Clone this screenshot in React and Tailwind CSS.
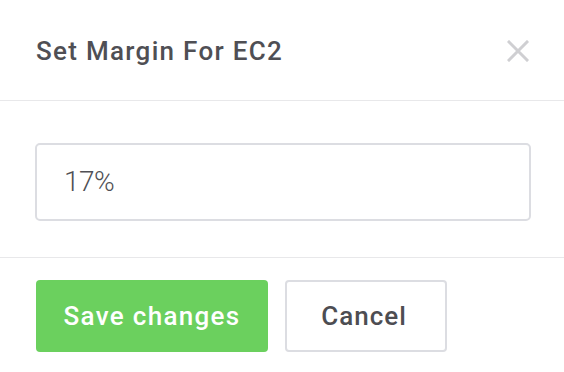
export default function App() {
  return (
    <div className="w-[564px] h-[372px] bg-white overflow-hidden" style={{ fontFamily: 'Roboto, "Liberation Sans", sans-serif' }}>
      <div className="h-[101px] flex items-center justify-between pl-[36px] pr-[35px] border-b border-[#e8e8ea]">
        <h2 className="text-[26px] font-medium tracking-[1.3px] text-[#4f4f54] leading-none pt-[2px]">Set Margin For EC2</h2>
        <svg width="22" height="22" viewBox="0 0 22 22" className="mt-[2px]">
          <path d="M2 2L20 20M20 2L2 20" stroke="#cfcfd2" strokeWidth="3" strokeLinecap="square" />
        </svg>
      </div>
      <div className="pt-[42px] pb-[36px] pl-[35px] pr-[33px] border-b border-[#e8e8ea]">
        <div className="h-[78px] border-2 border-[#dcdde2] rounded-[5px] flex items-center pl-[27px]">
          <span className="text-[28px] font-light tracking-[-0.5px] text-[#505055] leading-none">17%</span>
        </div>
      </div>
      <div className="pt-[22px] pl-[36px] flex gap-[17px]">
        <button className="h-[72px] w-[232px] bg-[#6bd05e] rounded-[4px] text-white text-[26px] font-medium tracking-[1.3px]">Save changes</button>
        <button className="h-[72px] w-[162px] border-2 border-[#dcdde2] rounded-[4px] text-[#4d4d52] text-[26px] font-medium tracking-[1px] pr-[4px]">Cancel</button>
      </div>
    </div>
  );
}
